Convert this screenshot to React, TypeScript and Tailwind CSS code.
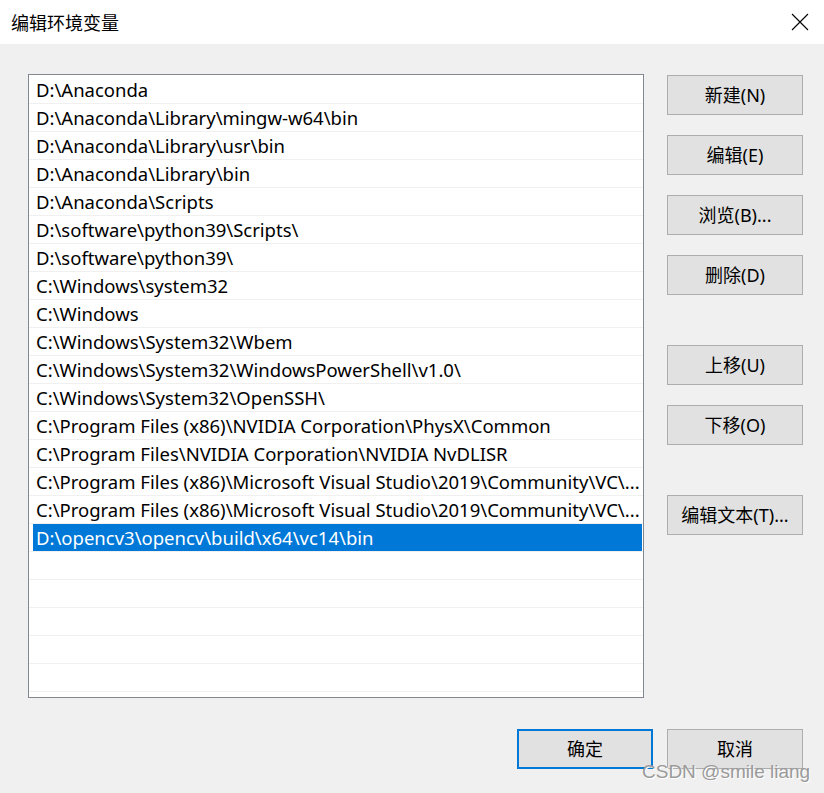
import React from 'react';

const PATHS = [
  'D:\\Anaconda',
  'D:\\Anaconda\\Library\\mingw-w64\\bin',
  'D:\\Anaconda\\Library\\usr\\bin',
  'D:\\Anaconda\\Library\\bin',
  'D:\\Anaconda\\Scripts',
  'D:\\software\\python39\\Scripts\\',
  'D:\\software\\python39\\',
  'C:\\Windows\\system32',
  'C:\\Windows',
  'C:\\Windows\\System32\\Wbem',
  'C:\\Windows\\System32\\WindowsPowerShell\\v1.0\\',
  'C:\\Windows\\System32\\OpenSSH\\',
  'C:\\Program Files (x86)\\NVIDIA Corporation\\PhysX\\Common',
  'C:\\Program Files\\NVIDIA Corporation\\NVIDIA NvDLISR',
  'C:\\Program Files (x86)\\Microsoft Visual Studio\\2019\\Community\\VC\\...',
  'C:\\Program Files (x86)\\Microsoft Visual Studio\\2019\\Community\\VC\\...',
  'D:\\opencv3\\opencv\\build\\x64\\vc14\\bin',
];

const SELECTED = 16;
const EMPTY_ROWS = 5;

function WinButton({ label, primary, className = '' }: { label: string; primary?: boolean; className?: string }) {
  return (
    <button
      className={
        'h-[40px] w-[136px] bg-[#e1e1e1] text-[18px] text-black flex items-center justify-center ' +
        (primary ? 'border-2 border-[#0078d7] ' : 'border border-[#adadad] ') +
        className
      }
    >
      {label}
    </button>
  );
}

export default function App() {
  return (
    <div
      className="relative w-[824px] h-[793px] bg-[#f0f0f0] flex flex-col overflow-hidden"
      style={{ fontFamily: '"Noto Sans", "Noto Sans CJK SC", sans-serif' }}
    >
      {/* title bar */}
      <div className="h-[44px] bg-white flex items-center justify-between pl-[11px] pr-[15px] shrink-0">
        <span className="text-[18px] text-black leading-none" style={{ fontFamily: '"Noto Sans CJK SC", sans-serif' }}>
          编辑环境变量
        </span>
        <svg width="18" height="18" viewBox="0 0 18 18" className="text-black">
          <path d="M1 1 L17 17 M17 1 L1 17" stroke="currentColor" strokeWidth="1.1" fill="none" />
        </svg>
      </div>

      <div className="flex flex-1 flex-col">
        <div className="flex mt-[30px] ml-[28px]">
          {/* list */}
          <div className="w-[616px] h-[624px] bg-white border border-[#828790] py-[1px] overflow-hidden">
            {PATHS.map((p, i) => (
              <div key={i} className="h-[28px] border-b border-[#f0f0f0] flex">
                <div
                  className={
                    'flex-1 flex items-center min-w-0 ' +
                    (i === SELECTED ? 'bg-[#0078d7] text-white ml-[4px] mr-[1px] pl-[3px]' : 'text-black pl-[7px]')
                  }
                >
                  <span className="text-[18.5px] whitespace-nowrap">{p}</span>
                </div>
              </div>
            ))}
            {Array.from({ length: EMPTY_ROWS }).map((_, i) => (
              <div key={'e' + i} className="h-[28px] border-b border-[#f0f0f0]" />
            ))}
          </div>

          {/* side buttons */}
          <div className="ml-[23px] flex flex-col pt-[1px]">
            <WinButton label="新建(N)" />
            <WinButton label="编辑(E)" className="mt-[20px]" />
            <WinButton label="浏览(B)..." className="mt-[20px]" />
            <WinButton label="删除(D)" className="mt-[20px]" />
            <WinButton label="上移(U)" className="mt-[50px]" />
            <WinButton label="下移(O)" className="mt-[20px]" />
            <WinButton label="编辑文本(T)..." className="mt-[50px]" />
          </div>
        </div>

        {/* bottom buttons */}
        <div className="flex justify-end gap-[14px] mt-[31px] mr-[21px]">
          <WinButton label="确定" primary />
          <WinButton label="取消" />
        </div>
      </div>

      {/* watermark */}
      <div
        className="absolute left-[642px] top-[762px] text-[19px] text-[#9a9a9a] leading-none"
        style={{ fontFamily: '"Liberation Sans", sans-serif', textShadow: '1px 1px 0 #ffffff' }}
      >
        CSDN @smile liang
      </div>
    </div>
  );
}
